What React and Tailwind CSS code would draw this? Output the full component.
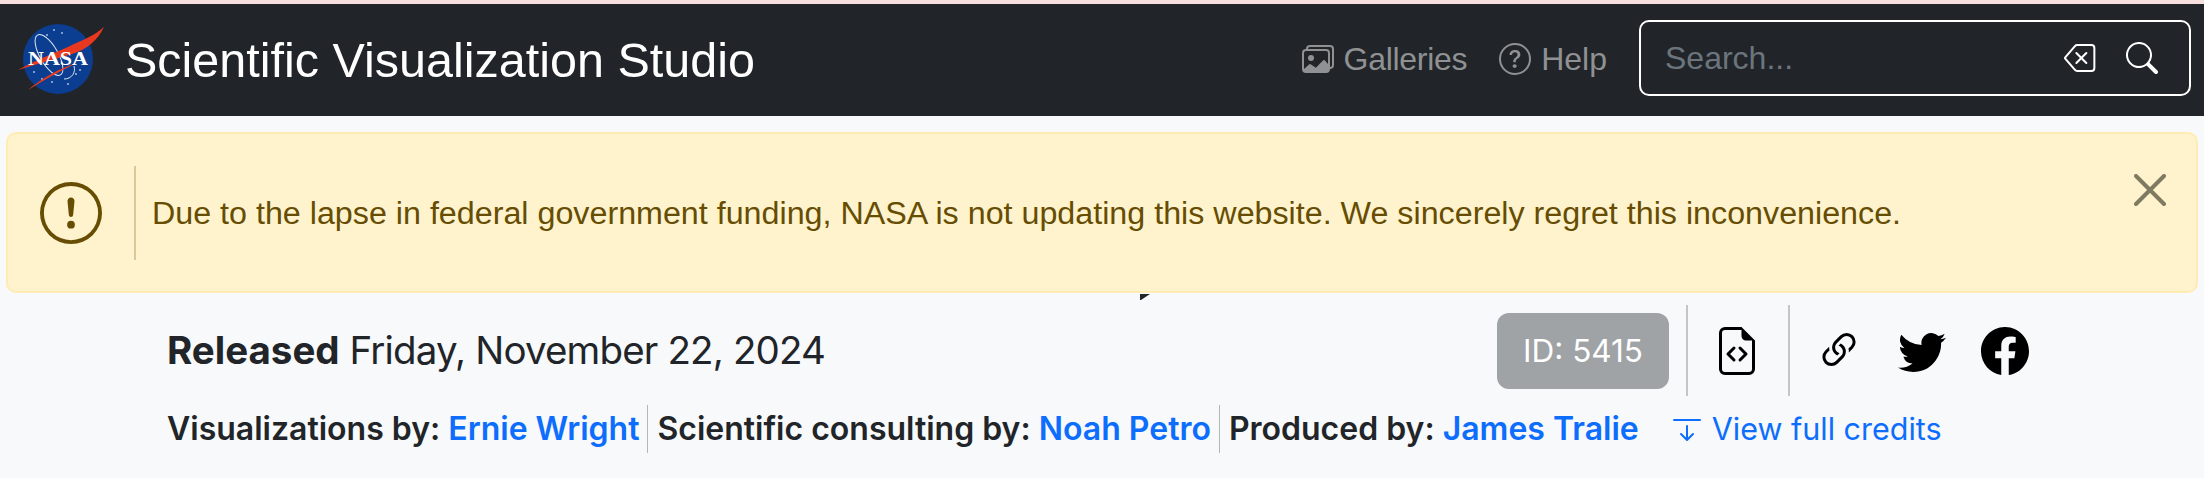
import { BsImages, BsQuestionCircle, BsBackspace, BsSearch, BsExclamationCircle, BsFileEarmarkCode, BsLink45Deg, BsTwitter, BsFacebook, BsArrowBarDown } from "react-icons/bs"

const NasaLogo = () => (
    <svg width="88" height="72" viewBox="0 0 88 72" className="mt-1 shrink-0">
        <circle cx="40" cy="35" r="35" fill="#0b3d91" />
        <g fill="#a9bce0">
            <circle cx="36" cy="6" r="1" /><circle cx="29" cy="11" r="1" /><circle cx="44" cy="9" r="1" />
            <circle cx="16" cy="48" r="1" /><circle cx="24" cy="55" r="1" /><circle cx="34" cy="58" r="1" />
            <circle cx="58" cy="50" r="1" /><circle cx="62" cy="46" r="1" /><circle cx="50" cy="60" r="1" />
        </g>
        <ellipse cx="31" cy="31" rx="9" ry="23" transform="rotate(-30 31 31)" fill="none" stroke="#dfe6f3" strokeWidth="1" />
        <path d="M46 55 C54 55 58 48 56 42" fill="none" stroke="#dfe6f3" strokeWidth="1" />
        <path d="M0 46 C22 34 40 28 56 20 C68 15 78 10 86 3 C80 16 68 26 54 30 C40 34 20 40 0 46 Z" fill="#e8381f" />
        <path d="M10 66 C24 54 42 44 59 39 C42 47 26 56 10 66 Z" fill="#e8381f" />
        <text x="10" y="41" fill="#fff" fontFamily="Liberation Serif, serif" fontWeight="700" fontSize="19" textLength="60" lengthAdjust="spacingAndGlyphs">NASA</text>
    </svg>
)

const App = () => {
    return (
        <div className="h-[478px] overflow-hidden bg-[#f8f9fa] font-['Inter',sans-serif] text-[#212529]">
            <div className="h-1 bg-[#f8dfdf]"></div>

            <nav className="flex h-[112px] items-center bg-[#212529] pb-1 pl-[18px] pr-[13px] font-['Liberation_Sans',sans-serif]">
                <NasaLogo />
                <span className="ml-[19px] mt-1 text-[48.5px] leading-none text-white">Scientific Visualization Studio</span>
                <a className="ml-auto mt-[2px] flex items-center gap-[10px] text-[32px] tracking-[-0.3px] text-[#8f9193]">
                    <BsImages className="h-8 w-8" /> Galleries
                </a>
                <a className="ml-8 mt-[2px] flex items-center gap-[10px] text-[32px] text-[#8f9193]">
                    <BsQuestionCircle className="h-8 w-8" /> Help
                </a>
                <div className="ml-8 flex h-[76px] w-[552px] items-center rounded-[10px] border-2 border-white pl-6 pr-[31px]">
                    <span className="flex-1 text-[32px] text-[#6c757d]">Search...</span>
                    <BsBackspace className="h-8 w-8 text-white" />
                    <BsSearch className="ml-[30px] h-8 w-8 text-white" />
                </div>
            </nav>

            <div className="relative z-10 mx-[6px] mt-4 flex h-[161px] items-center rounded-[10px] border-2 border-[#ffecb5] bg-[#fff3cd] font-['Liberation_Sans',sans-serif] text-[#664d03]">
                <BsExclamationCircle className="ml-8 h-[62px] w-[62px] shrink-0" />
                <div className="ml-8 h-[94px] w-[2px] bg-[#664d03] opacity-25"></div>
                <p className="ml-4 mt-[1px] text-[32.25px]">Due to the lapse in federal government funding, NASA is not updating this website. We sincerely regret this inconvenience.</p>
                <svg width="32" height="32" viewBox="0 0 32 32" className="absolute right-[30px] top-[40px] text-[#7f7a62]">
                    <path d="M2 2 L30 30 M30 2 L2 30" stroke="currentColor" strokeWidth="4" strokeLinecap="round" />
                </svg>
            </div>

            <div className="relative pl-[167px] pr-[175px]">
                {/* tail of the page heading that sticks out from under the alert */}
                <svg width="10" height="6" viewBox="0 0 10 6" className="absolute left-[1140px] top-[1px] text-[#212529]">
                    <path d="M0 0 H10 L1 6 H0 Z" fill="currentColor" />
                </svg>
                <div className="flex items-center justify-between pt-3">
                    <p className="text-[38.5px] tracking-[-0.85px]"><b className="font-bold tracking-normal">Released</b> Friday, November 22, 2024</p>
                    <div className="flex h-[91px] items-center">
                        <span className="flex h-[76px] w-[172px] items-center justify-center rounded-xl bg-[#9fa3a6] text-[31.5px] text-white">ID: 5415</span>
                        <div className="ml-[17px] h-full w-[2px] bg-[#c4c5c6]"></div>
                        <BsFileEarmarkCode className="ml-[25px] h-12 w-12 text-black" />
                        <div className="ml-[27px] h-full w-[2px] bg-[#c4c5c6]"></div>
                        <BsLink45Deg className="ml-[25px] h-12 w-12 text-black" />
                        <BsTwitter className="ml-[35px] h-12 w-12 text-black" />
                        <BsFacebook className="ml-[35px] h-12 w-12 text-black" />
                    </div>
                </div>
                <div className="mt-[9px] flex items-center text-[32px]">
                    <span className="font-semibold">Visualizations by: <a className="text-[#0d6efd]">Ernie Wright</a></span>
                    <div className="ml-2 mr-[9px] h-12 w-[1px] bg-[#b5b6b7]"></div>
                    <span className="font-semibold">Scientific consulting by: <a className="text-[#0d6efd]">Noah Petro</a></span>
                    <div className="ml-2 mr-[9px] h-12 w-[1px] bg-[#b5b6b7]"></div>
                    <span className="font-semibold">Produced by: <a className="text-[#0d6efd]">James Tralie</a></span>
                    <a className="ml-8 flex items-center gap-[9px] text-[30.5px] text-[#0d6efd]">
                        <BsArrowBarDown className="h-8 w-8" /> View full credits
                    </a>
                </div>
            </div>
        </div>
    );
};

export default App;
